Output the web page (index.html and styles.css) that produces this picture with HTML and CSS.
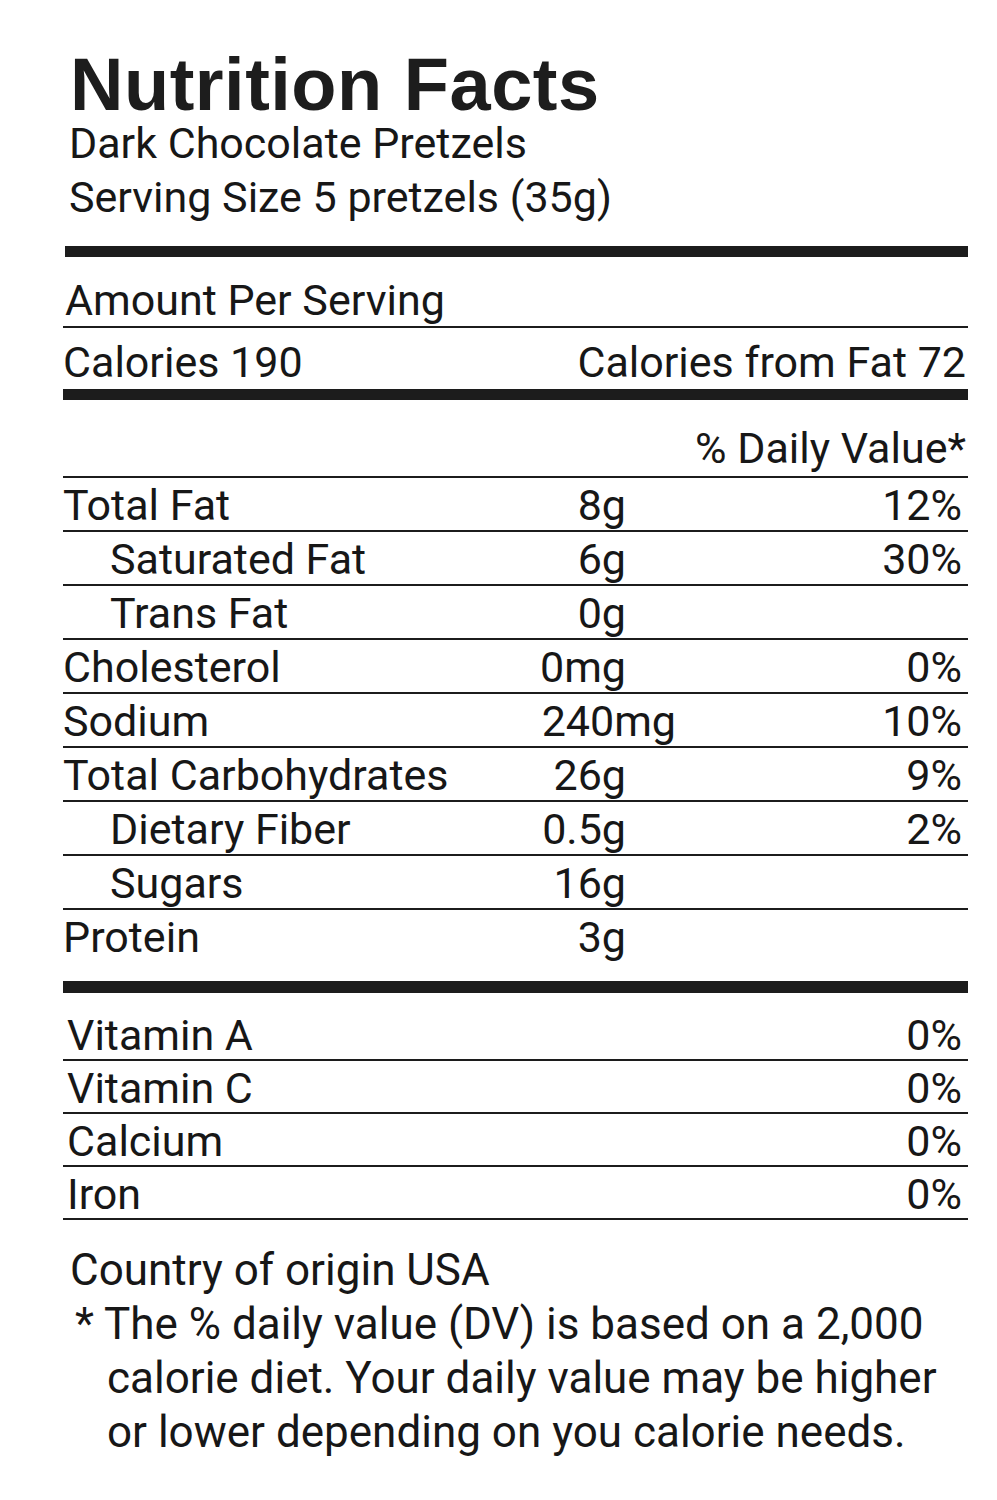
FILE: index.html
```html
<!DOCTYPE html>
<html lang="en">
<head>
<meta charset="utf-8">
<title>Nutrition Facts</title>
<link rel="stylesheet" href="styles.css">
</head>
<body>
<div class="label">
  <h1 class="title">Nutrition Facts</h1>
  <div class="sub">Dark Chocolate Pretzels</div>
  <div class="sub">Serving Size 5 pretzels (35g)</div>
  <div class="bar bar-top"></div>

  <div class="line-row amount-per">Amount Per Serving</div>
  <div class="line-row calories"><span>Calories 190</span><span>Calories from Fat 72</span></div>
  <div class="bar"></div>
  <div class="line-row dv-head">% Daily Value*</div>

  <div class="nutrients">
    <div class="nrow"><span class="name">Total Fat</span><span class="amt">8g</span><span class="dv">12%</span></div>
    <div class="nrow"><span class="name sub-item">Saturated Fat</span><span class="amt">6g</span><span class="dv">30%</span></div>
    <div class="nrow"><span class="name sub-item">Trans Fat</span><span class="amt">0g</span><span class="dv"></span></div>
    <div class="nrow"><span class="name">Cholesterol</span><span class="amt">0mg</span><span class="dv">0%</span></div>
    <div class="nrow"><span class="name">Sodium</span><span class="amt wide">240mg</span><span class="dv">10%</span></div>
    <div class="nrow"><span class="name">Total Carbohydrates</span><span class="amt">26g</span><span class="dv">9%</span></div>
    <div class="nrow"><span class="name sub-item">Dietary Fiber</span><span class="amt">0.5g</span><span class="dv">2%</span></div>
    <div class="nrow"><span class="name sub-item">Sugars</span><span class="amt">16g</span><span class="dv"></span></div>
    <div class="nrow last"><span class="name">Protein</span><span class="amt">3g</span><span class="dv"></span></div>
  </div>
  <div class="bar bar-bottom"></div>

  <div class="vitamins">
    <div class="vrow"><span>Vitamin A</span><span>0%</span></div>
    <div class="vrow"><span>Vitamin C</span><span>0%</span></div>
    <div class="vrow"><span>Calcium</span><span>0%</span></div>
    <div class="vrow"><span>Iron</span><span>0%</span></div>
  </div>

  <div class="footer">
    <p class="origin">Country of origin USA</p>
    <p class="note">* The % daily value (DV) is based on a 2,000<br>calorie diet. Your daily value may be higher<br>or lower depending on you calorie needs.</p>
  </div>
</div>
</body>
</html>
```

FILE: styles.css
```css
html, body {
  margin: 0;
  padding: 0;
  background: #ffffff;
}

body {
  color: #171717;
  font-family: Roboto, "Open Sans", "Liberation Sans", sans-serif;
}

.label {
  width: 905px;
  margin-left: 63px;
  padding-top: 56px;
  padding-bottom: 40px;
}

.title {
  margin: 0 0 0 7px;
  font-family: "Liberation Sans", Arial, sans-serif;
  font-weight: 700;
  font-size: 74px;
  line-height: 58px;
  letter-spacing: 0.5px;
  color: #1d1d1d;
}

.sub {
  margin-left: 6px;
  font-size: 43px;
  line-height: 54px;
}

.sub:first-of-type {
  margin-top: 2px;
}

.bar {
  height: 11px;
  background: #1c1c1c;
  margin-top: 1px;
}

.bar-top {
  margin-top: 22px;
  margin-left: 2px;
}

.line-row {
  font-size: 43px;
  line-height: 52px;
  border-bottom: 2px solid #1c1c1c;
}

.amount-per {
  padding-top: 17px;
  padding-left: 2px;
}

.calories {
  padding-top: 8px;
  display: flex;
  justify-content: space-between;
  padding-right: 2px;
  border-bottom: none;
}

.dv-head {
  padding-top: 22px;
  padding-bottom: 2px;
  text-align: right;
  padding-right: 2px;
}

.nrow {
  display: grid;
  grid-template-columns: 413px 150px 1fr;
  padding: 3px 6px 0 0;
  font-size: 43px;
  line-height: 49px;
  border-bottom: 2px solid #1c1c1c;
}

.nrow.last {
  border-bottom: none;
  padding-bottom: 2px;
}

.name.sub-item {
  padding-left: 47px;
}

.amt {
  text-align: right;
}

.amt.wide {
  margin-right: -50px;
}

.dv {
  text-align: right;
}

.bar-bottom {
  margin-top: 17px;
  height: 12px;
}

.vitamins {
  margin-top: 15px;
}

.vrow {
  display: flex;
  justify-content: space-between;
  padding: 4px 6px 0 4px;
  font-size: 43px;
  line-height: 47px;
  border-bottom: 2px solid #1c1c1c;
}

.footer {
  margin-top: 23px;
  font-size: 44px;
  line-height: 54px;
}

.footer p {
  margin: 0;
}

.origin {
  padding-left: 7px;
}

.note {
  padding-left: 44px;
  text-indent: -32px;
}
```
